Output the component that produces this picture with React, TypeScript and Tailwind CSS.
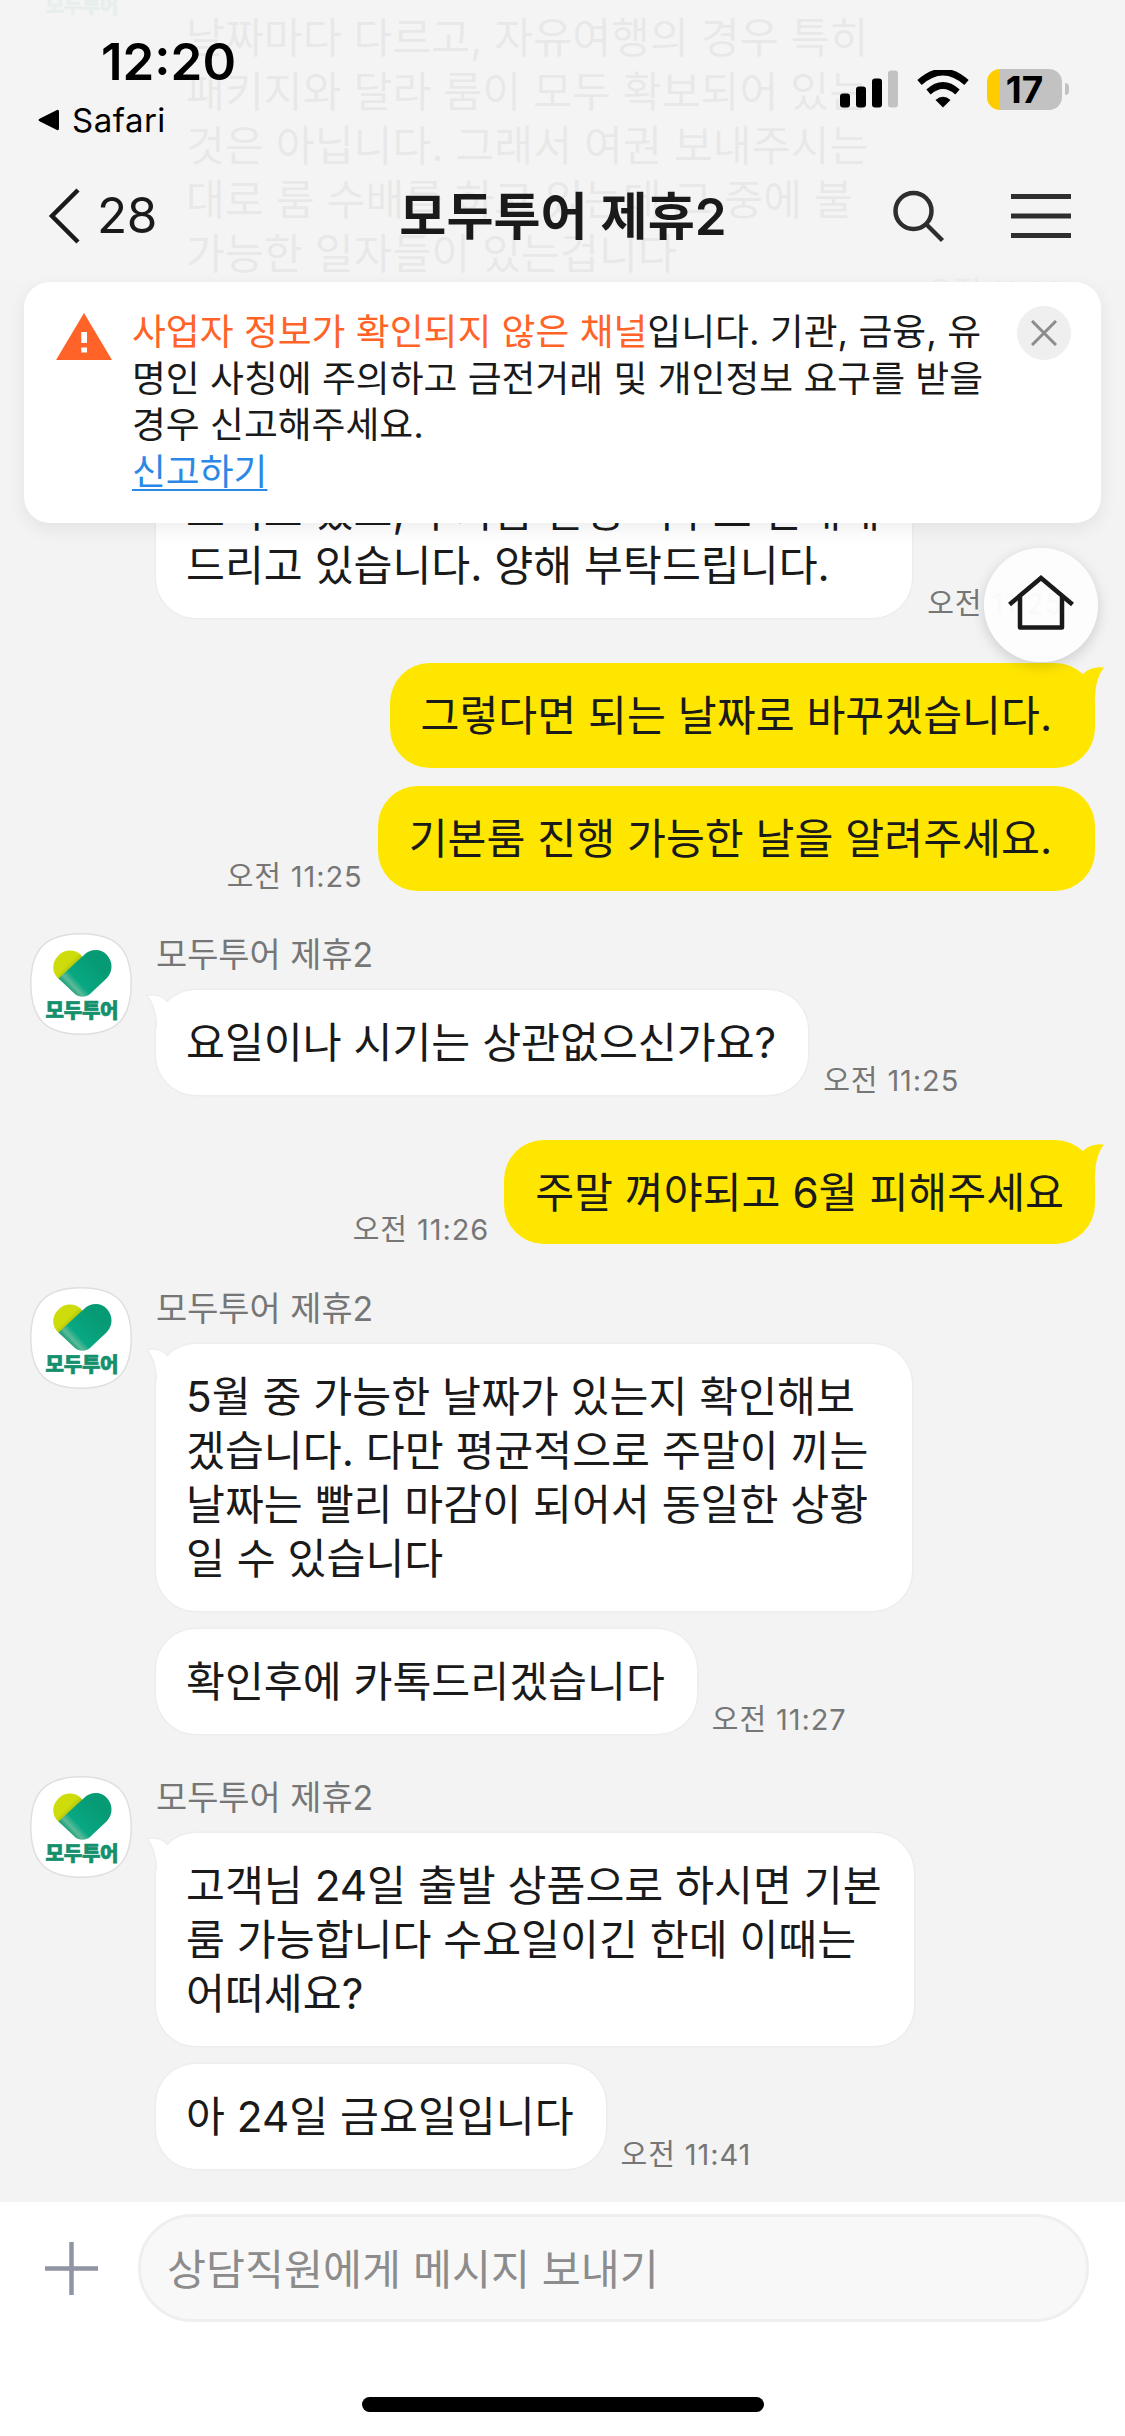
import React from 'react';
import clsx from 'clsx';

interface Message {
  lines: string[];
  time?: string;
}

interface MessageGroup {
  from: 'channel' | 'me';
  messages: Message[];
}

const CHANNEL_NAME = '모두투어 제휴2';

// Trailing spaces are kept as typed, they widen the bubble
const groups: MessageGroup[] = [
  {
    from: 'channel',
    messages: [
      {
        lines: [
          '날짜마다 다르고, 자유여행의 경우 특히 ',
          '패키지와 달라 룸이 모두 확보되어 있는 ',
          '것은 아닙니다. 그래서 여권 보내주시는',
          '대로 룸 수배를 하고 있는데 그 중에 불',
          '가능한 일자들이 있는겁니다',
        ],
        time: '오전 11:22',
      },
    ],
  },
  {
    from: 'channel',
    messages: [
      {
        lines: [
          '이 점은 예약 전에 미리 안내를 해',
          '드리고 있고, 추가금 발생 여부도 안내해',
          '드리고 있습니다. 양해 부탁드립니다.',
        ],
        time: '오전 11:25',
      },
    ],
  },
  {
    from: 'me',
    messages: [
      { lines: ['그렇다면 되는 날짜로 바꾸겠습니다. '] },
      { lines: ['기본룸 진행 가능한 날을 알려주세요. '], time: '오전 11:25' },
    ],
  },
  {
    from: 'channel',
    messages: [{ lines: ['요일이나 시기는 상관없으신가요?'], time: '오전 11:25' }],
  },
  {
    from: 'me',
    messages: [{ lines: ['주말 껴야되고 6월 피해주세요'], time: '오전 11:26' }],
  },
  {
    from: 'channel',
    messages: [
      {
        lines: [
          '5월 중 가능한 날짜가 있는지 확인해보',
          '겠습니다. 다만 평균적으로 주말이 끼는 ',
          '날짜는 빨리 마감이 되어서 동일한 상황',
          '일 수 있습니다',
        ],
      },
      { lines: ['확인후에 카톡드리겠습니다'], time: '오전 11:27' },
    ],
  },
  {
    from: 'channel',
    messages: [
      {
        lines: [
          '고객님 24일 출발 상품으로 하시면 기본',
          '룸 가능합니다 수요일이긴 한데 이때는',
          '어떠세요?',
        ],
      },
      { lines: ['아 24일 금요일입니다'], time: '오전 11:41' },
    ],
  },
];

const Avatar: React.FC = () => (
  <svg className="h-[102px] w-[102px] shrink-0" viewBox="0 0 102 102">
    <defs>
      <linearGradient id="leaf" x1="0" y1="0" x2="1" y2="1">
        <stop offset="0.45" stopColor="#cfdc0c" />
        <stop offset="0.7" stopColor="#8fae0c" />
      </linearGradient>
      <linearGradient id="heart" gradientUnits="userSpaceOnUse" x1="34" y1="52" x2="62" y2="26">
        <stop offset="0" stopColor="#0d9a74" />
        <stop offset="0.16" stopColor="#5cba98" />
        <stop offset="0.34" stopColor="#08a883" />
        <stop offset="1" stopColor="#069b74" />
      </linearGradient>
    </defs>
    <path
      d="M51 .8C86 .8 101.200 16 101.200 51S86 101.200 51 101.200 .8 86 .8 51 16 .8 51 .8Z"
      fill="#fff"
      stroke="#dfdfdf"
      strokeWidth="1.500"
    />
    <path d="M29 46C22 41 21 30 28 23C34 16 45 16 51 22L54 26L32 48Z" fill="url(#leaf)" />
    <path d="M28.500 45.500L54 22C60 16 71 15 77 22C83 29 83 38 77 45L60 61C56 64.500 49 64.500 45 61Z" fill="url(#heart)" />
    <text
      x="52"
      y="84.500"
      textAnchor="middle"
      textLength="73"
      fill="#14906c"
      stroke="#14906c"
      strokeWidth="0.700"
      className="font-['Noto_Sans_CJK_KR',sans-serif] text-[20px] font-black"
    >
      모두투어
    </text>
  </svg>
);

const Bubble: React.FC<{ message: Message; mine: boolean; tail: boolean }> = ({ message, mine, tail }) => (
  <div className={clsx('flex items-end gap-[15px]', mine && 'flex-row-reverse')}>
    <div
      className={clsx(
        'relative rounded-[40px] pt-[25.800px] pb-[24.800px] text-[42.300px] leading-[54px] text-[#1a1a1a]',
        mine ? 'bg-[#ffe600] pl-[31px] pr-[31px]' : 'bg-white pl-[30px] pr-[32px] shadow-[0_0_0_1.5px_#ededed]',
      )}
    >
      {tail && !mine && (
        <svg className="absolute -left-[10px] top-[3px] h-10 w-10" viewBox="0 0 40 40">
          <path d="M11 36C11 22 8 11 1 3Q14 0 22 9L40 2V36Z" fill="#fff" />
          <path d="M10.300 34C10.300 22 8 11 1 2.500Q14 0 22 9" fill="none" stroke="#ededed" strokeWidth="1.300" />
        </svg>
      )}
      {tail && mine && (
        <svg className="absolute -right-[9px] top-[3px] h-10 w-10" viewBox="0 0 40 40">
          <path d="M31 34C31 20 34 9 40 1.500Q27 0 19 8L8 2V34Z" fill="#ffe600" />
        </svg>
      )}
      {message.lines.map((line, i) => (
        <p key={i} className="whitespace-pre">
          {line}
        </p>
      ))}
    </div>
    {message.time && (
      <span className="-mb-[2px] whitespace-nowrap text-[29px] leading-[32px] tracking-[0.9px] text-[#767676]">
        {message.time}
      </span>
    )}
  </div>
);

const Group: React.FC<{ group: MessageGroup }> = ({ group }) => {
  const mine = group.from === 'me';
  const bubbles = group.messages.map((message, i) => (
    <Bubble key={i} message={message} mine={mine} tail={i === 0} />
  ));

  if (mine) {
    return <div className="mt-[45px] mb-[42.300px] flex flex-col gap-[18.400px] pr-[30px]">{bubbles}</div>;
  }

  return (
    <div className="flex gap-6 pl-[30px]">
      <Avatar />
      <div>
        <div className="h-[57.300px] text-[33.900px] leading-[43px] text-[#767676]">{CHANNEL_NAME}</div>
        <div className="flex flex-col gap-[18.400px]">{bubbles}</div>
      </div>
    </div>
  );
};

const StatusBar: React.FC = () => (
  <div className="flex h-[150px] justify-between pl-[38px] pr-[56px]">
    <div className="pt-[30px]">
      <div className="pl-[63px] text-[51px] font-semibold leading-[64px] text-black">12:20</div>
      <div className="flex items-center gap-3 text-[33px] leading-[52px] text-black">
        <svg className="h-[22px] w-[22px]" viewBox="0 0 22 22">
          <path d="M2 9.500L19 1Q21 0 21 3V19Q21 22 19 21L2 12.500Q-1 11 2 9.500Z" />
        </svg>
        <span className="tracking-[0.5px]">Safari</span>
      </div>
    </div>
    <div className="mt-[68px] flex h-[42px] items-center">
      <svg className="h-[38px] w-[58px]" viewBox="0 0 58 38">
        <rect x="0" y="23.500" width="10" height="14" rx="3" />
        <rect x="16" y="16.500" width="10" height="21" rx="3" />
        <rect x="32" y="8.500" width="10" height="29" rx="3" />
        <rect x="48" y="0.500" width="10" height="37" rx="3" fill="#c2c2c2" />
      </svg>
      <svg className="ml-[19px] h-[38px] w-[52px]" viewBox="0 0 52 38">
        <path d="M2.500 12.500Q26 -8.500 49.500 12.500" fill="none" stroke="#000" strokeWidth="6.500" />
        <path d="M11.500 22Q26 9 40.500 22" fill="none" stroke="#000" strokeWidth="6.500" />
        <path d="M18.500 30Q26 23.500 33.500 30L26 37.500Z" />
      </svg>
      <div className="ml-[18px] flex h-[41px] w-[75px] items-center justify-center rounded-[13px] bg-[linear-gradient(to_right,#ffcc00_13px,#c2c2c2_13px)] text-[37px] font-bold leading-none text-black">
        17
      </div>
      <div className="ml-[3px] h-3 w-1 rounded-r-full bg-[#c2c2c2]" />
    </div>
  </div>
);

const NavBar: React.FC = () => (
  <div className="grid h-[132px] grid-cols-[1fr_auto_1fr] items-center pl-[48px] pr-[54px] text-[#1a1a1a]">
    <div className="flex items-center gap-[16px]">
      <svg className="h-[56px] w-[33px]" viewBox="0 0 33 56" fill="none" stroke="currentColor" strokeWidth="4.500">
        <path d="M30 2L4 28L30 54" />
      </svg>
      <span className="text-[49.500px] leading-none tracking-[-0.5px]">28</span>
    </div>
    <h1 className="whitespace-nowrap pl-[7px] text-[51.200px] font-semibold leading-[64px]">{CHANNEL_NAME}</h1>
    <div className="flex items-center justify-end gap-[66px] text-[#2e2e2e]">
      <svg className="h-[54px] w-[54px]" viewBox="0 0 54 54" fill="none" stroke="currentColor" strokeWidth="4.500">
        <circle cx="22.500" cy="22" r="18" />
        <path d="M35.500 35.500L51.500 51.500" />
      </svg>
      <svg className="h-[46px] w-[60px]" viewBox="0 0 60 46" stroke="currentColor" strokeWidth="5">
        <path d="M0 3.500H60M0 23H60M0 42.500H60" />
      </svg>
    </div>
  </div>
);

const WarningBanner: React.FC = () => (
  <div className="mx-6 flex h-[241px] rounded-[26px] bg-white pl-8 pr-[30px] pt-6 shadow-[0_6px_18px_rgba(0,0,0,0.07)]">
    <svg className="mt-[7px] h-[47px] w-[56px] shrink-0" viewBox="0 0 56 47">
      <path d="M28 0L56 47H0Z" fill="#ff6328" />
      <path d="M25.300 19H31V30H25.300ZM25.300 34.500H31V39.500H25.300Z" fill="#fff" />
    </svg>
    <div className="ml-[20px] flex-1 whitespace-nowrap pt-[3px] text-[36.800px] leading-[46.600px] text-[#1a1a1a]">
      <p>
        <span className="text-[#ff6328]">사업자 정보가 확인되지 않은 채널</span>입니다. 기관, 금융, 유
      </p>
      <p>명인 사칭에 주의하고 금전거래 및 개인정보 요구를 받을</p>
      <p>경우 신고해주세요.</p>
      <a className="text-[#2b88e6] underline decoration-2 underline-offset-[4px]">신고하기</a>
    </div>
    <button className="flex size-[54px] shrink-0 items-center justify-center rounded-full bg-[#efefef]">
      <svg className="size-[26px]" viewBox="0 0 26 26" stroke="#8c8c8c" strokeWidth="3">
        <path d="M1 1L25 25M25 1L1 25" />
      </svg>
    </button>
  </div>
);

const InputBar: React.FC = () => (
  <div className="flex h-[234px] flex-col justify-between bg-white pb-6 pt-3">
    <div className="flex h-[108px] items-center pl-[45px] pr-9">
      <svg className="size-[53px]" viewBox="0 0 53 53" stroke="#9095a3" strokeWidth="4.500">
        <path d="M0 26.500H53M26.500 0V53" />
      </svg>
      <div className="ml-10 flex h-full flex-1 items-center rounded-[54px] border-[3px] border-[#efefef] bg-[#f8f8f8] pl-[26px] pt-[3px] text-[42.400px] text-[#8c8c8c]">
        상담직원에게 메시지 보내기
      </div>
    </div>
    <div className="h-[15px] w-[402px] self-center rounded-full bg-black" />
  </div>
);

export default function App() {
  return (
    <div className="relative flex h-[2436px] w-[1125px] flex-col overflow-hidden bg-[#f3f3f3] font-['Inter','Noto_Sans_CJK_KR',sans-serif]">
      <main className="min-h-0 flex-1 overflow-hidden">
        <div className="-mt-[72px] flex flex-col">
          {groups.map((group, i) => (
            <div
              key={i}
              className={clsx(
                group.from === 'channel' && i > 0 && groups[i - 1].from === 'channel' && 'mt-[42.300px]',
              )}
            >
              <Group group={group} />
            </div>
          ))}
        </div>
      </main>
      <InputBar />

      {/* Header floats over the scrolled messages */}
      <header className="absolute inset-x-0 top-0">
        <div className="bg-[#f3f3f3]/95">
          <StatusBar />
          <NavBar />
        </div>
        <WarningBanner />
        <button className="ml-[984px] mt-[25px] flex size-[114px] items-center justify-center rounded-full bg-[#fdfdfd]/97 pb-[7px] shadow-[0_4px_14px_rgba(0,0,0,0.16)]">
          <svg className="h-[56px] w-[66px]" viewBox="0 0 66 56" fill="none" stroke="#1a1a1a" strokeWidth="4.500">
            <path d="M1.500 30.500L33 4L64.500 30.500" />
            <path d="M12 23V53.500H54V23" strokeLinejoin="round" />
          </svg>
        </button>
      </header>
    </div>
  );
}
